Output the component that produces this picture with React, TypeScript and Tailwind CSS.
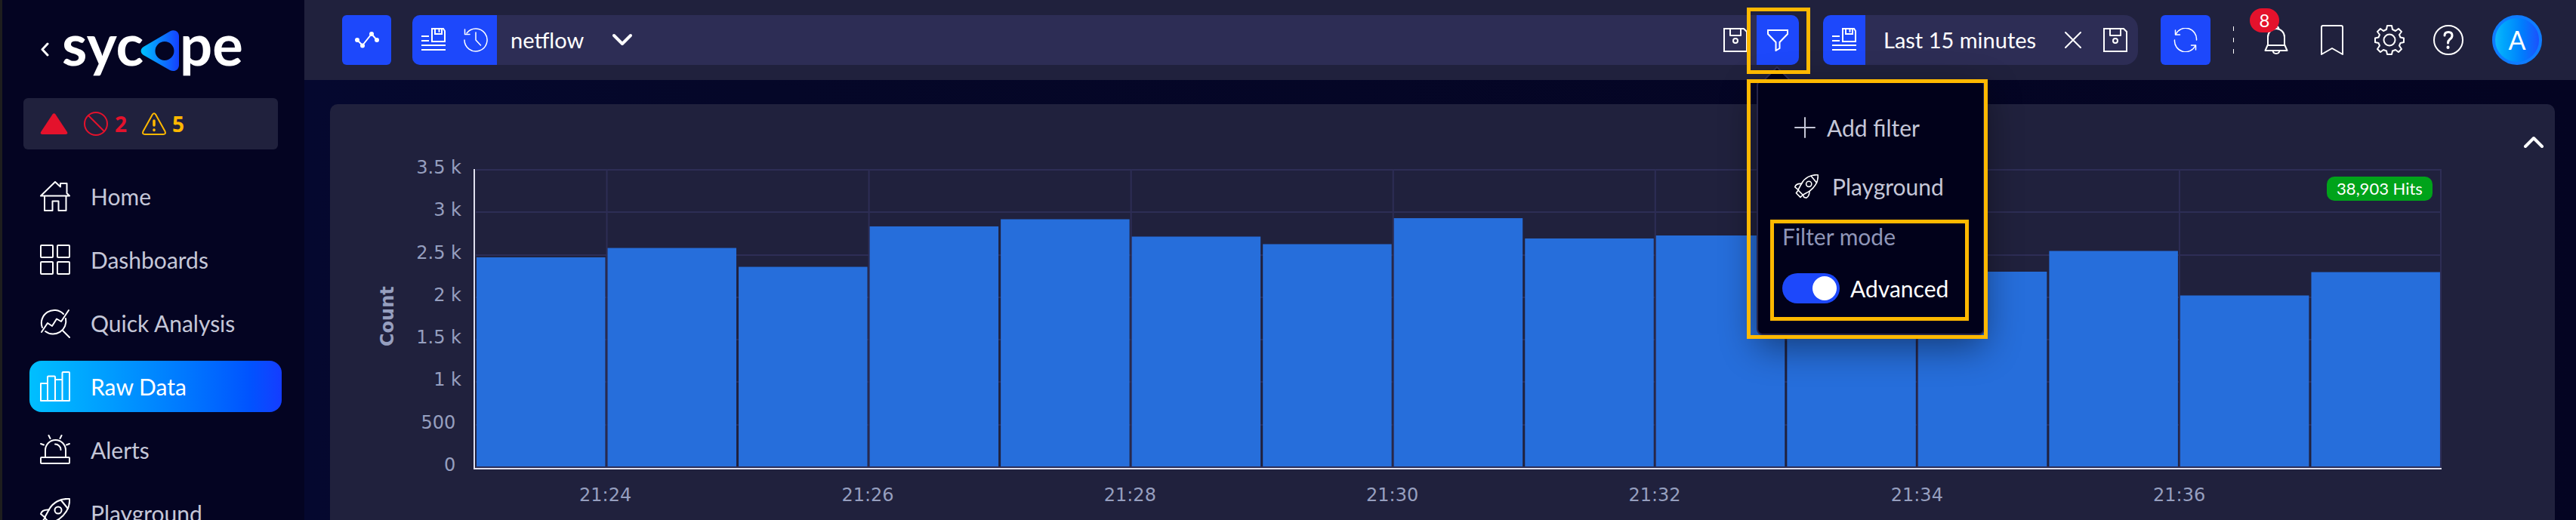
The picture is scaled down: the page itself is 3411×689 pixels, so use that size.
import type { ReactNode } from 'react';
import { useState } from 'react';

const hits = [2470, 2580, 2358, 2834, 2918, 2714, 2625, 2931, 2692, 2727, 2891, 2301, 2545, 2021, 2296];
const maxHits = 3500;
const plotHeight = 394;
const yLabels = ['3.5 k', '3 k', '2.5 k', '2 k', '1.5 k', '1 k', '500 ', '0 '];
const xLabels = ['21:24', '21:26', '21:28', '21:30', '21:32', '21:34', '21:36'];

const Svg = ({ w, h, sw = 2, className = '', children }: { w: number; h: number; sw?: number; className?: string; children: ReactNode }) => (
  <svg
    width={w}
    height={h}
    viewBox={`0 0 ${w} ${h}`}
    fill="none"
    stroke="currentColor"
    strokeWidth={sw}
    strokeLinecap="round"
    strokeLinejoin="round"
    className={`shrink-0 ${className}`}
    aria-hidden="true"
  >
    {children}
  </svg>
);

const HomeIcon = () => (
  <Svg w={40} h={40}>
    <path d="M1 19.5H39L35.5 16V3H27V7.5L20 1Z" />
    <path d="M6 20V39H16.5V26.5H24.5V39H34.5V20" />
  </Svg>
);

const DashboardsIcon = () => (
  <Svg w={40} h={40}>
    <rect x="1" y="1" width="16" height="16" rx="1" />
    <rect x="23" y="1" width="16" height="16" rx="1" />
    <rect x="1" y="23" width="16" height="16" rx="1" />
    <rect x="23" y="23" width="16" height="16" rx="1" />
  </Svg>
);

const QuickIcon = () => (
  <Svg w={40} h={40}>
    <path d="M3 26A17 17 0 0 1 31 8" />
    <path d="M34 14A17 17 0 0 1 7 31" />
    <path d="M2 32L10 20L16 24L22 14.5L28 18L38 3" />
    <path d="M30 30L39 39" />
  </Svg>
);

const RawIcon = () => (
  <Svg w={40} h={40}>
    <path d="M1 39V16H10M10 39V7.500a1 1 0 0 1 1-1H19a1 1 0 0 1 1 1V39M20 11H29.500M29.500 39V2a1 1 0 0 1 1-1H38a1 1 0 0 1 1 1V39ZM1 39H39" />
  </Svg>
);

const AlertsIcon = () => (
  <Svg w={40} h={40}>
    <path d="M11.500 1L13.500 5M28.500 1L26.500 5M1 12L5 13.500M39 12L35 13.500" />
    <path d="M7 30V20.500A13.500 13.500 0 0 1 34 20.500V30" />
    <path d="M20 12.500A7.500 7.500 0 0 1 27.500 20" />
    <rect x="1" y="30" width="38" height="8" rx="1" />
  </Svg>
);

const RocketIcon = ({ size = 40 }: { size?: number }) => (
  <svg
    width={size}
    height={size}
    viewBox="0 0 40 40"
    fill="none"
    stroke="currentColor"
    strokeWidth="2"
    strokeLinecap="round"
    strokeLinejoin="round"
    className="shrink-0"
    aria-hidden="true"
  >
    <path d="M39 1C27 0 17 6 12 15L6 26L14 34L25 28C34 21 40 12 39 1Z" />
    <path d="M28 3L37 14" />
    <circle cx="24" cy="16" r="4.500" />
    <path d="M12 15.500C6 15 2 17 1 21L7 26" />
    <path d="M25 28C25 33 23 37 20 39L16 38L14 34" />
    <path d="M6 27L3 31L10 38L13 35" />
  </svg>
);

const ListSaveIcon = () => (
  <Svg w={32} h={32}>
    <path d="M0 11H10M0 17H10M0 23H32M0 29H32" strokeLinecap="butt" />
    <path d="M14 1H29L31 4V18H14ZM18 1V8H27V1M23.500 2V5" strokeLinejoin="miter" />
  </Svg>
);

const SaveIcon = () => (
  <Svg w={32} h={38}>
    <path d="M1 4H27L31 8V34H1Z" strokeLinejoin="miter" />
    <path d="M9 4V13H23V4" />
    <circle cx="16" cy="20" r="3" />
  </Svg>
);

const HistoryIcon = () => (
  <Svg w={32} h={32} sw={1.5}>
    <path d="M1 16A15 15 0 1 0 4 7" />
    <path d="M1.500 2V8.500H8M16 6V16L22.500 23" />
  </Svg>
);

const Logo = () => (
  <svg width="244" height="96" viewBox="0 0 244 96" className="shrink-0 overflow-visible" role="img" aria-label="sycope">
    <defs>
      <linearGradient id="logoFill" x1="0" x2="1" y1="0" y2="0">
        <stop offset="0" stopColor="#00c3ff" />
        <stop offset="1" stopColor="#1440ff" />
      </linearGradient>
    </defs>
    <g fill="#ffffff" fontFamily="Lato, sans-serif" fontSize="76" fontWeight="700">
      <text x="0" y="67">syc</text>
      <text x="156" y="67">pe</text>
    </g>
    <path
      fillRule="evenodd"
      fill="url(#logoFill)"
      d="M108 42L143 21.500C149 18.500 155 21.500 155 28V66C155 72.500 149 76 143 73L108 53C103.500 50 103.500 45 108 42ZM136 35A12.500 12.500 0 1 0 136 60A12.500 12.500 0 1 0 136 35Z"
    />
  </svg>
);

const navItems = [
  { label: 'Home', icon: <HomeIcon /> },
  { label: 'Dashboards', icon: <DashboardsIcon /> },
  { label: 'Quick Analysis', icon: <QuickIcon /> },
  { label: 'Raw Data', icon: <RawIcon />, active: true },
  { label: 'Alerts', icon: <AlertsIcon /> },
  { label: 'Playground', icon: <RocketIcon /> },
];

const Sidebar = () => (
  <aside className="w-[403px] shrink-0 border-l-3 border-[#1e1e1e] bg-[#040422] pt-5">
    <div className="flex items-center gap-4 pl-[51px]">
      <button aria-label="Collapse menu" className="text-white">
        <Svg w={12} h={24} sw={3}>
          <path d="M9 2L2 9.500L9 17" />
        </Svg>
      </button>
      <Logo />
    </div>

    <div className="mt-[14px] ml-7 mr-[35px] flex h-[68px] items-center rounded-md bg-[#20213d] pl-[22px] font-['Noto_Sans',sans-serif] text-[28px] font-bold">
      <svg width="37" height="28" viewBox="0 0 37 28" fill="#e4122c" aria-hidden="true">
        <path d="M16.500 1.500Q18.500 -1 20.500 1.500L36 25Q37 28 34 28H3Q0 28 1 25Z" />
      </svg>
      <span className="ml-[21px] flex items-center gap-[9px] text-[#e4122c]">
        <Svg w={32} h={32}>
          <circle cx="16" cy="16" r="15" />
          <path d="M6 5L27 26" />
        </Svg>
        2
      </span>
      <span className="ml-5 flex items-center gap-2 text-[#ffb800]">
        <Svg w={32} h={30}>
          <path d="M14 2.500Q16 0 18 2.500L30.500 25Q32 29 28 29H4Q0 29 1.500 25Z" />
          <path d="M16 11V17" strokeWidth="3.500" />
          <path d="M16 23V23.500" strokeWidth="3.500" />
        </Svg>
        5
      </span>
    </div>

    <nav className="mt-7 flex flex-col gap-4 pl-9 pr-[30px]">
      {navItems.map((item) => (
        <a
          key={item.label}
          href="#"
          className={
            item.active
              ? 'flex h-[68px] items-center gap-[27px] rounded-2xl bg-linear-to-r from-[#00bfff] to-[#143cff] pl-[14px] text-white'
              : 'flex h-[68px] items-center gap-[27px] rounded-2xl pl-[14px] text-[#c5c7d8]'
          }
        >
          <span className="text-white">{item.icon}</span>
          {item.label}
        </a>
      ))}
    </nav>
  </aside>
);

const FilterMenu = () => {
  const [advanced, setAdvanced] = useState(true);

  return (
    <>
      <svg width="34" height="17" viewBox="0 0 34 17" className="absolute left-[10px] top-[68px]" aria-hidden="true">
        <path d="M1 17L17 1L33 17" fill="#01011a" stroke="#2d2d55" strokeWidth="2" />
      </svg>
      <div className="absolute left-0 top-[85px] z-10 w-[302px] rounded-lg border-2 border-[#25254a] bg-[#01011a] px-8 pb-10 pt-[42px] text-[30px] text-[#c5c7d8] shadow-[0_16px_48px_rgba(0,0,0,0.45)]">
        <button className="ml-4 flex h-10 items-center gap-[15px]">
          <Svg w={28} h={28}>
            <path d="M14 1V27M1 14H27" />
          </Svg>
          Add filter
        </button>
        <button className="ml-4 mt-[38px] flex h-10 items-center gap-[18px]">
          <span className="text-white">
            <RocketIcon size={32} />
          </span>
          Playground
        </button>
        <p className="mt-[26px] leading-10 text-[#8f96b8]">Filter mode</p>
        <label className="mt-[29px] flex h-10 items-center gap-[14px] whitespace-nowrap text-white">
          <input
            type="checkbox"
            role="switch"
            checked={advanced}
            onChange={(e) => setAdvanced(e.target.checked)}
            className="h-10 w-[76px] shrink-0 appearance-none rounded-full bg-[#3a3b60] p-1 before:block before:size-8 before:rounded-full before:bg-white checked:bg-[#1d48fb] checked:before:ml-9"
          />
          Advanced
        </label>
      </div>

      {/* highlight frames */}
      <div className="pointer-events-none absolute -left-[13px] -top-[10px] z-20 h-[88px] w-[84px] border-5 border-[#ffb800]" />
      <div className="pointer-events-none absolute -left-[13px] top-[85px] z-20 h-[344px] w-[319px] border-5 border-[#ffb800]" />
      <div className="pointer-events-none absolute left-[18px] top-[271px] z-20 h-[134px] w-[263px] border-5 border-[#ffb800]" />
    </>
  );
};

const Header = () => (
  <header className="flex h-[106px] shrink-0 items-center bg-[#20213d] pl-[50px] pr-[45px] text-[29px] text-white">
    <button aria-label="Chart" className="flex h-[66px] w-[65px] shrink-0 items-center justify-center rounded-md bg-[#1d48fb]">
      <Svg w={32} h={22}>
        <path d="M3 11L10 18L22 3L29 11" />
        <g fill="currentColor" stroke="none">
          <circle cx="3" cy="11" r="3" />
          <circle cx="10" cy="18.500" r="3" />
          <circle cx="22" cy="3" r="3" />
          <circle cx="29" cy="11" r="3" />
        </g>
      </Svg>
    </button>

    <div className="relative ml-7 flex h-[66px] flex-1 items-center rounded-[10px] bg-[#2d2d55]">
      <div className="flex h-full items-center gap-6 rounded-l-[10px] bg-[#1d48fb] px-3">
        <button aria-label="Saved views">
          <ListSaveIcon />
        </button>
        <button aria-label="History">
          <HistoryIcon />
        </button>
      </div>
      <select aria-label="Data source" className="ml-[18px] w-[134px] appearance-none bg-transparent">
        <option>netflow</option>
      </select>
      <Svg w={28} h={18} sw={4} className="pointer-events-none">
        <path d="M3 3L14 14L25 3" />
      </Svg>
      <button aria-label="Save" className="ml-auto mr-3">
        <SaveIcon />
      </button>
      <div className="relative">
        <button aria-label="Filter" className="flex h-[66px] w-14 items-center justify-center rounded-r-[10px] bg-[#1d48fb]">
          <Svg w={30} h={30}>
            <path d="M2 2H28V7L17.500 18V26L12.500 29V18L2 7Z" strokeLinejoin="miter" />
          </Svg>
        </button>
        <FilterMenu />
      </div>
    </div>

    <div className="ml-8 flex h-[66px] w-[417px] shrink-0 items-center rounded-[18px] bg-[#2d2d55] pr-[14px]">
      <button aria-label="Saved ranges" className="flex h-full w-14 items-center justify-center rounded-l-[10px] bg-[#1d48fb]">
        <ListSaveIcon />
      </button>
      <button className="ml-6 flex-1 whitespace-nowrap text-left">Last 15 minutes</button>
      <button aria-label="Clear">
        <Svg w={24} h={28}>
          <path d="M2 4L22 24M22 4L2 24" />
        </Svg>
      </button>
      <button aria-label="Save range" className="ml-7">
        <SaveIcon />
      </button>
    </div>

    <button aria-label="Refresh" className="ml-[30px] flex size-[66px] shrink-0 items-center justify-center rounded-md bg-[#1d48fb]">
      <Svg w={32} h={32} sw={1.5}>
        <path d="M3 8.500A14.500 14.500 0 0 1 30.500 16M1.500 16A14.500 14.500 0 0 0 29 23.500" />
        <path d="M2.500 3V9H8.500M23.500 23H29.500V29" />
      </Svg>
    </button>

    <div className="ml-[30px] flex h-9 w-px shrink-0 flex-col justify-between">
      <span className="h-1.5 bg-white" />
      <span className="h-1.5 bg-white" />
      <span className="h-1.5 bg-white" />
    </div>

    <div className="ml-[38px] flex shrink-0 items-center gap-[38px]">
      <button aria-label="Notifications" className="relative flex w-9 justify-center">
        <Svg w={32} h={38}>
          <path d="M5 25V15A11 11 0 0 1 27 15V25L30.500 33H1.500L5 25ZM5 26H27" />
          <path d="M12.500 4.500Q13 1 16 1Q19 1 19.500 4.500M11.500 33Q12 37 16 37Q20 37 20.500 33" />
        </Svg>
        <span className="absolute -left-[17px] -top-[23px] flex h-8 w-[39px] items-center justify-center rounded-full bg-[#e4122c] text-2xl">8</span>
      </button>
      <button aria-label="Bookmarks" className="flex w-9 justify-center">
        <Svg w={32} h={40}>
          <path d="M2 39V3Q2 1 4 1H28Q30 1 30 3V39L16 31Z" />
        </Svg>
      </button>
      <button aria-label="Settings">
        <Svg w={40} h={40}>
          <path d="M17 1H23L24 6L28 8L32 5L36 9L33 13L34.500 16.500L39 17.500V23L34.500 24L33 27.500L36 32L32 36L28 33L24 34.500L23 39H17L16 34.500L12 33L8 36L4 32L7 27.500L5.500 24L1 23V17.500L5.500 16.500L7 13L4 9L8 5L12 8L16 6Z" />
          <circle cx="20" cy="20" r="7.500" />
        </Svg>
      </button>
      <button aria-label="Help">
        <Svg w={40} h={40}>
          <circle cx="20" cy="20" r="19" />
          <path d="M15 14Q15 9.500 20 9.500Q25 9.500 25 14Q25 17 22 19Q19.500 21 19.500 24" strokeWidth="3" />
          <path d="M19.500 29.500V30" strokeWidth="4" />
        </Svg>
      </button>
      <button className="size-[66px] rounded-full border-4 border-[#0f7cff] bg-linear-to-r from-[#10b8fb] to-[#1b50fc] text-[34px] leading-none">A</button>
    </div>
  </header>
);

const HitsChart = () => (
  <section className="mx-7 ml-[34px] mt-8 flex flex-1 items-start rounded-t-[10px] bg-[#20213d] font-['DejaVu_Sans',sans-serif] text-2xl leading-8 text-[#969fbf]">
    <div className="flex h-[426px] shrink-0 pl-[60px] mt-[68px]">
      <div className="rotate-180 text-center font-bold [writing-mode:vertical-rl]">Count</div>
      <ul className="flex w-[82px] flex-col justify-between text-right whitespace-pre">
        {yLabels.map((label) => (
          <li key={label}>{label}</li>
        ))}
      </ul>
    </div>

    <div className="ml-4 mt-[86px] flex-1">
      <div className="relative border-b-2 border-l-2 border-[#e0e0ee] pl-px">
        <svg className="block w-full" height="396" aria-label="Hits over time">
          <g fill="#2d2d55">
            {yLabels.map((label, i) => (
              <rect key={label} x="0" y={(i * plotHeight) / 7} width="100%" height="2" shapeRendering="crispEdges" />
            ))}
            {[1, 3, 5, 7, 9, 11, 13].map((i) => (
              <rect key={i} x={`${(i * 100) / 15}%`} y="0" width="2" height={plotHeight} transform="translate(-1 0)" />
            ))}
            <rect x="100%" y="0" width="2" height={plotHeight} transform="translate(-2 0)" />
          </g>
          <g fill="#266edb" transform="translate(1 0)">
            {hits.map((count, i) => {
              const h = (count / maxHits) * plotHeight;
              return <rect key={i} x={`${(i * 100) / 15}%`} y={plotHeight + 1 - h} width="6.55%" height={h - 1} />;
            })}
          </g>
        </svg>
        <span className="absolute right-3 top-[10px] flex h-8 w-[140px] items-center justify-center rounded-[10px] bg-[#00a31a] font-[Lato,sans-serif] text-[22px] text-white">
          38,903 Hits
        </span>
      </div>
      <div className="mt-[18px] grid grid-cols-[repeat(15,1fr)] pl-px text-center">
        {xLabels.map((label) => (
          <span key={label} className="col-span-2">{label}</span>
        ))}
      </div>
    </div>

    <div className="flex w-[150px] shrink-0 justify-end pr-[14px] pt-[42px] text-white">
      <button aria-label="Collapse chart">
        <Svg w={28} h={16} sw={4}>
          <path d="M3 14L14 3L25 14" />
        </Svg>
      </button>
    </div>
  </section>
);

export default function App() {
  return (
    <div className="flex h-screen overflow-hidden bg-[#040422] font-[Lato,sans-serif] text-[30px] leading-10">
      <Sidebar />
      <main className="flex min-w-0 flex-1 flex-col bg-linear-to-r from-[#05082f] via-[#050728] via-20% to-[#040422]">
        <Header />
        <HitsChart />
      </main>
    </div>
  );
}
